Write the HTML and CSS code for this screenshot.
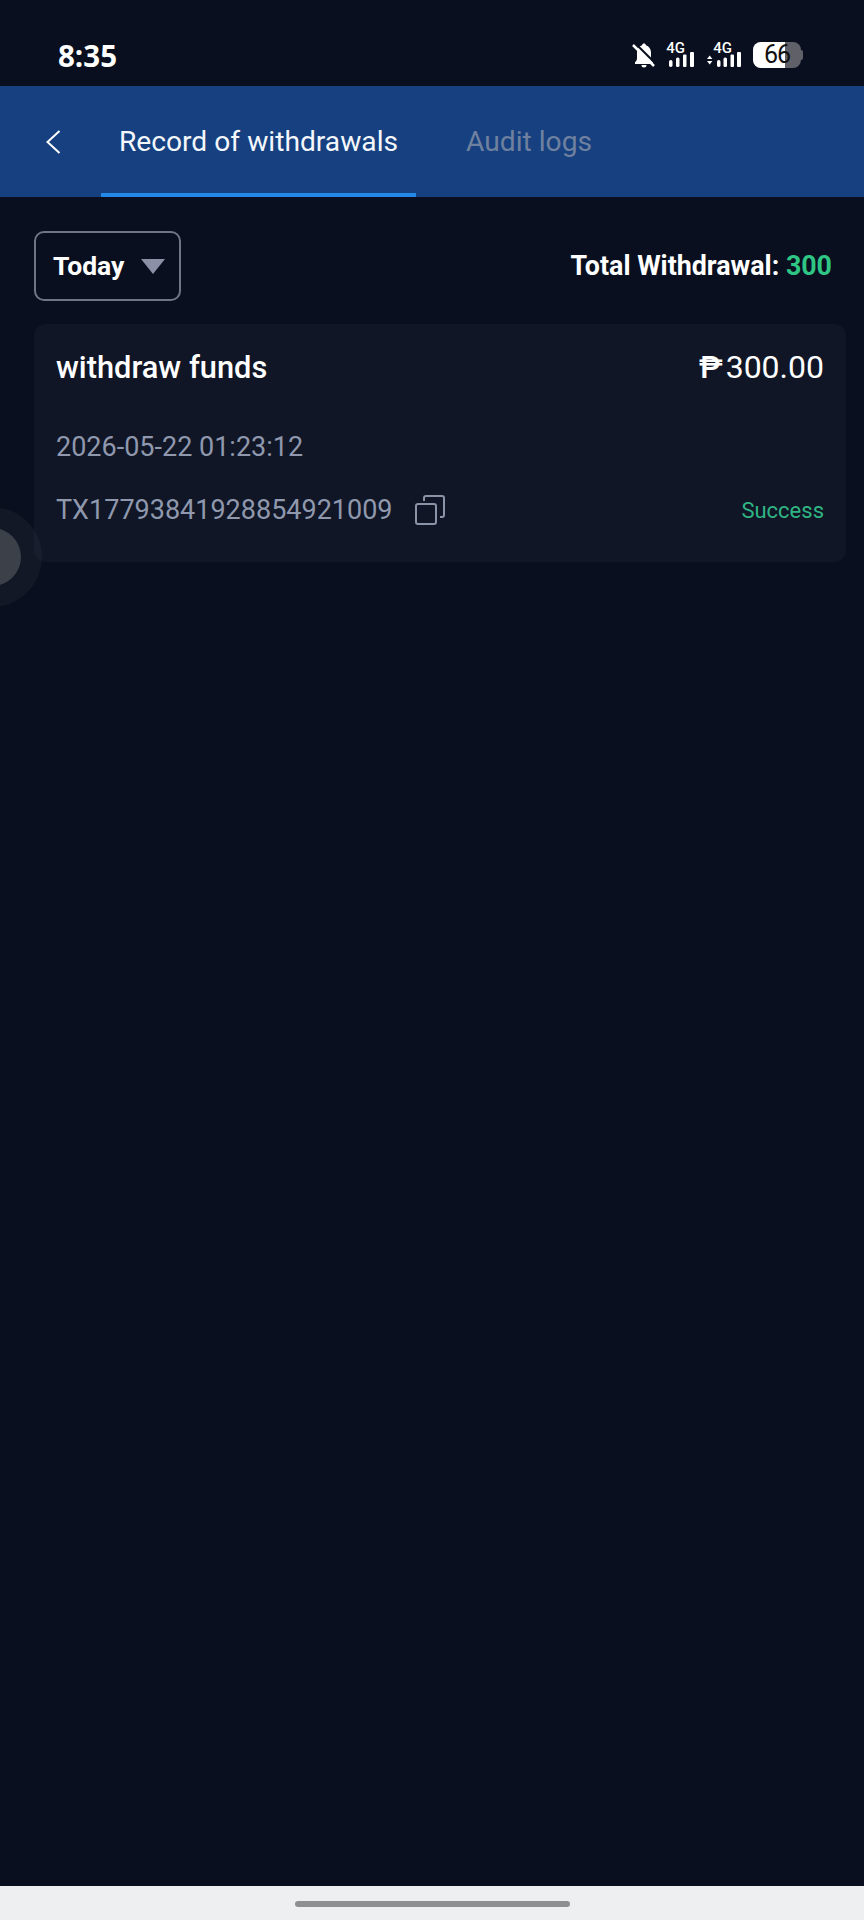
FILE: index.html
```html
<!DOCTYPE html>
<html lang="en">
<head>
  <meta charset="UTF-8">
  <title>Record of withdrawals</title>
  <meta name="viewport" content="width=device-width, initial-scale=1.0">
  <link rel="stylesheet" href="styles.css">
</head>
<body>
  <div class="screen">
    <div class="status-bar">
      <span class="clock">8:35</span>
      <div class="status-icons">
        <svg class="icon-bell" width="23" height="25" viewBox="0 0 23 25">
          <path fill="#fff" d="M12 0.500c-1 0-1.800.7-1.900 1.700C7 3.100 5 5.900 5 9.500v6c0 1.500-.8 2.700-2 3.700v1.800h18v-1.800c-1.200-1-2-2.200-2-3.700v-6c0-3.600-2-6.400-5.100-7.300C13.800 1.200 13 0.500 12 0.500zM9.500 22h5a2.500 2.500 0 0 1-5 0z"/>
          <path stroke="#090f1e" stroke-width="2" d="M3 0l21 21"/>
          <path stroke="#fff" stroke-width="2.500" d="M1 2l21 21"/>
        </svg>
        <div class="signal">
          <span class="net-label">4G</span>
          <svg width="27" height="15" viewBox="0 0 27 15">
            <rect x="2" y="8" width="3.500" height="7" rx="1.700" fill="#fff"/>
            <rect x="9" y="5.500" width="3.500" height="9.500" rx="1.500" fill="#fff"/>
            <rect x="16" y="2.500" width="3.500" height="12.500" rx="1" fill="#fff"/>
            <rect x="23" y="0" width="4" height="15" rx="1" fill="#fff"/>
          </svg>
        </div>
        <div class="signal signal-second">
          <span class="net-label">4G</span>
          <svg width="34" height="15" viewBox="0 0 34 15">
            <path fill="#fff" d="M0 7l2.700-3.500L5.400 7zM0 9l2.700 3.500L5.400 9z"/>
            <rect x="10" y="8" width="3.500" height="7" rx="1.700" fill="#fff"/>
            <rect x="16.500" y="5.500" width="3.500" height="9.500" rx="1.500" fill="#fff"/>
            <rect x="23.500" y="2.500" width="3.500" height="12.500" rx="1" fill="#fff"/>
            <rect x="30" y="0" width="4" height="15" rx="1" fill="#fff"/>
          </svg>
        </div>
        <div class="battery">
          <div class="battery-fill"></div>
          <span class="battery-level">66</span>
          <div class="battery-cap"></div>
        </div>
      </div>
    </div>

    <div class="tabs">
      <a class="back">
        <svg width="15" height="24" viewBox="0 0 15 24">
          <path d="M13.500 1L1.500 12l12 11" fill="none" stroke="#fff" stroke-width="2"/>
        </svg>
      </a>
      <div class="tab tab-active">Record of withdrawals</div>
      <div class="tab tab-muted">Audit logs</div>
    </div>

    <div class="content">
      <div class="filter-row">
        <button class="filter" type="button">Today<span class="caret"></span></button>
        <div class="total">Total Withdrawal: <span class="total-value">300</span></div>
      </div>

      <div class="record">
        <div class="record-head">
          <span class="record-title">withdraw funds</span>
          <span class="record-amount">₱<span class="amount-num">300.00</span></span>
        </div>
        <div class="record-date">2026-05-22 01:23:12</div>
        <div class="record-foot">
          <div class="record-id">
            <span>TX17793841928854921009</span>
            <svg class="copy" width="30" height="30" viewBox="0 0 30 30">
              <rect x="1" y="9" width="20" height="20" rx="2" fill="none" stroke="#8b93a6" stroke-width="2"/>
              <path d="M9 6V3c0-1.100.9-2 2-2h16c1.100 0 2 .9 2 2v17c0 1.100-.9 2-2 2h-2" fill="none" stroke="#8b93a6" stroke-width="2"/>
            </svg>
          </div>
          <span class="record-status">Success</span>
        </div>
      </div>
    </div>

    <div class="float-ball"><div class="float-ball-inner"></div></div>

    <div class="nav-bar"><div class="nav-pill"></div></div>
  </div>
</body>
</html>
```

FILE: styles.css
```css
* {
  box-sizing: border-box;
}
html, body {
  margin: 0;
  padding: 0;
}
body {
  background: #090f1e;
  font-family: Roboto, "Liberation Sans", sans-serif;
  color: #fff;
}
.screen {
  position: relative;
  width: 864px;
  height: 1920px;
  overflow: hidden;
  display: flex;
  flex-direction: column;
}
.status-bar {
  height: 86px;
  flex: none;
  display: flex;
  justify-content: space-between;
  align-items: center;
  padding: 24px 63px 0 58px;
}
.clock {
  font-family: "Open Sans", Roboto, sans-serif;
  font-size: 29.5px;
  font-weight: 700;
}
.status-icons {
  display: flex;
  align-items: center;
}
.icon-bell {
  margin-right: 12px;
}
.signal {
  display: flex;
  flex-direction: column;
  align-items: flex-end;
  width: 27px;
  margin-right: 13px;
}
.signal-second {
  width: 34px;
  margin-right: 12px;
}
.net-label {
  font-size: 15px;
  font-weight: 500;
  line-height: 11px;
  margin-right: 9px;
  margin-bottom: -2px;
}
.signal svg {
  display: block;
}
.battery {
  position: relative;
  width: 48px;
  height: 26px;
  border-radius: 8px;
  background: #5f6068;
  display: flex;
  align-items: center;
  justify-content: center;
}
.battery-fill {
  position: absolute;
  left: 0;
  top: 0;
  bottom: 0;
  width: 32px;
  background: #fff;
  border-radius: 8px 0 0 8px;
}
.battery-level {
  position: relative;
  color: #111;
  font-size: 25px;
  line-height: 26px;
  letter-spacing: -1px;
}
.battery-cap {
  position: absolute;
  right: -2px;
  top: 8px;
  width: 2px;
  height: 10px;
  background: #5f6068;
  border-radius: 0 2px 2px 0;
}
.tabs {
  height: 111px;
  flex: none;
  display: flex;
  background: #16407f;
}
.back {
  width: 101px;
  flex: none;
  display: flex;
  align-items: center;
  padding-left: 46px;
}
.tab {
  font-size: 28.2px;
  display: flex;
  align-items: center;
  justify-content: center;
}
.tab-active {
  width: 315px;
  color: #f4f7fb;
  padding-top: 4px;
  border-bottom: 4px solid #2388e6;
}
.tab-muted {
  margin-left: 50px;
  color: #6f819f;
}
.content {
  padding: 34px 18px 0 34px;
}
.filter-row {
  display: flex;
  justify-content: space-between;
  align-items: center;
  margin-bottom: 23px;
  padding-right: 14px;
}
.filter {
  width: 147px;
  height: 70px;
  border: 2px solid #6f7585;
  border-radius: 10px;
  background: transparent;
  color: #fff;
  font-family: inherit;
  font-size: 26.5px;
  font-weight: 700;
  display: flex;
  align-items: center;
  padding: 0 0 2px 17px;
}
.caret {
  width: 0;
  height: 0;
  margin: 2px 0 0 17px;
  border-left: 12px solid transparent;
  border-right: 12px solid transparent;
  border-top: 15px solid #8a90a6;
}
.total {
  font-size: 26.8px;
  font-weight: 700;
}
.total-value {
  color: #2fc584;
}
.record {
  height: 238px;
  background: #101626;
  border-radius: 12px;
  padding: 23px 22px 0 22px;
}
.record-head {
  display: flex;
  justify-content: space-between;
  align-items: center;
  height: 40px;
}
.record-title {
  font-size: 30.8px;
  font-weight: 500;
}
.record-amount {
  font-size: 32px;
  font-weight: 500;
}
.amount-num {
  font-weight: 400;
  margin-left: 3px;
}
.record-date {
  margin-top: 45px;
  font-size: 27px;
  color: #8f98ad;
  line-height: 30px;
}
.record-foot {
  display: flex;
  justify-content: space-between;
  align-items: center;
  margin-top: 32px;
}
.record-id {
  display: flex;
  align-items: center;
  font-size: 27px;
  color: #8f98ad;
}
.copy {
  margin-left: 22px;
}
.record-status {
  font-size: 22px;
  color: #2fb583;
}
.float-ball {
  position: absolute;
  left: -58px;
  top: 507px;
  width: 100px;
  height: 100px;
  border-radius: 50%;
  background: rgba(60, 66, 78, 0.18);
  display: flex;
  align-items: center;
  justify-content: center;
}
.float-ball-inner {
  width: 58px;
  height: 58px;
  border-radius: 50%;
  background: #3c4149;
}
.nav-bar {
  margin-top: auto;
  height: 34px;
  flex: none;
  background: #eeeff1;
  display: flex;
  justify-content: center;
  padding-top: 15px;
}
.nav-pill {
  width: 275px;
  height: 6px;
  border-radius: 3px;
  background: #8f8f8f;
}
```
